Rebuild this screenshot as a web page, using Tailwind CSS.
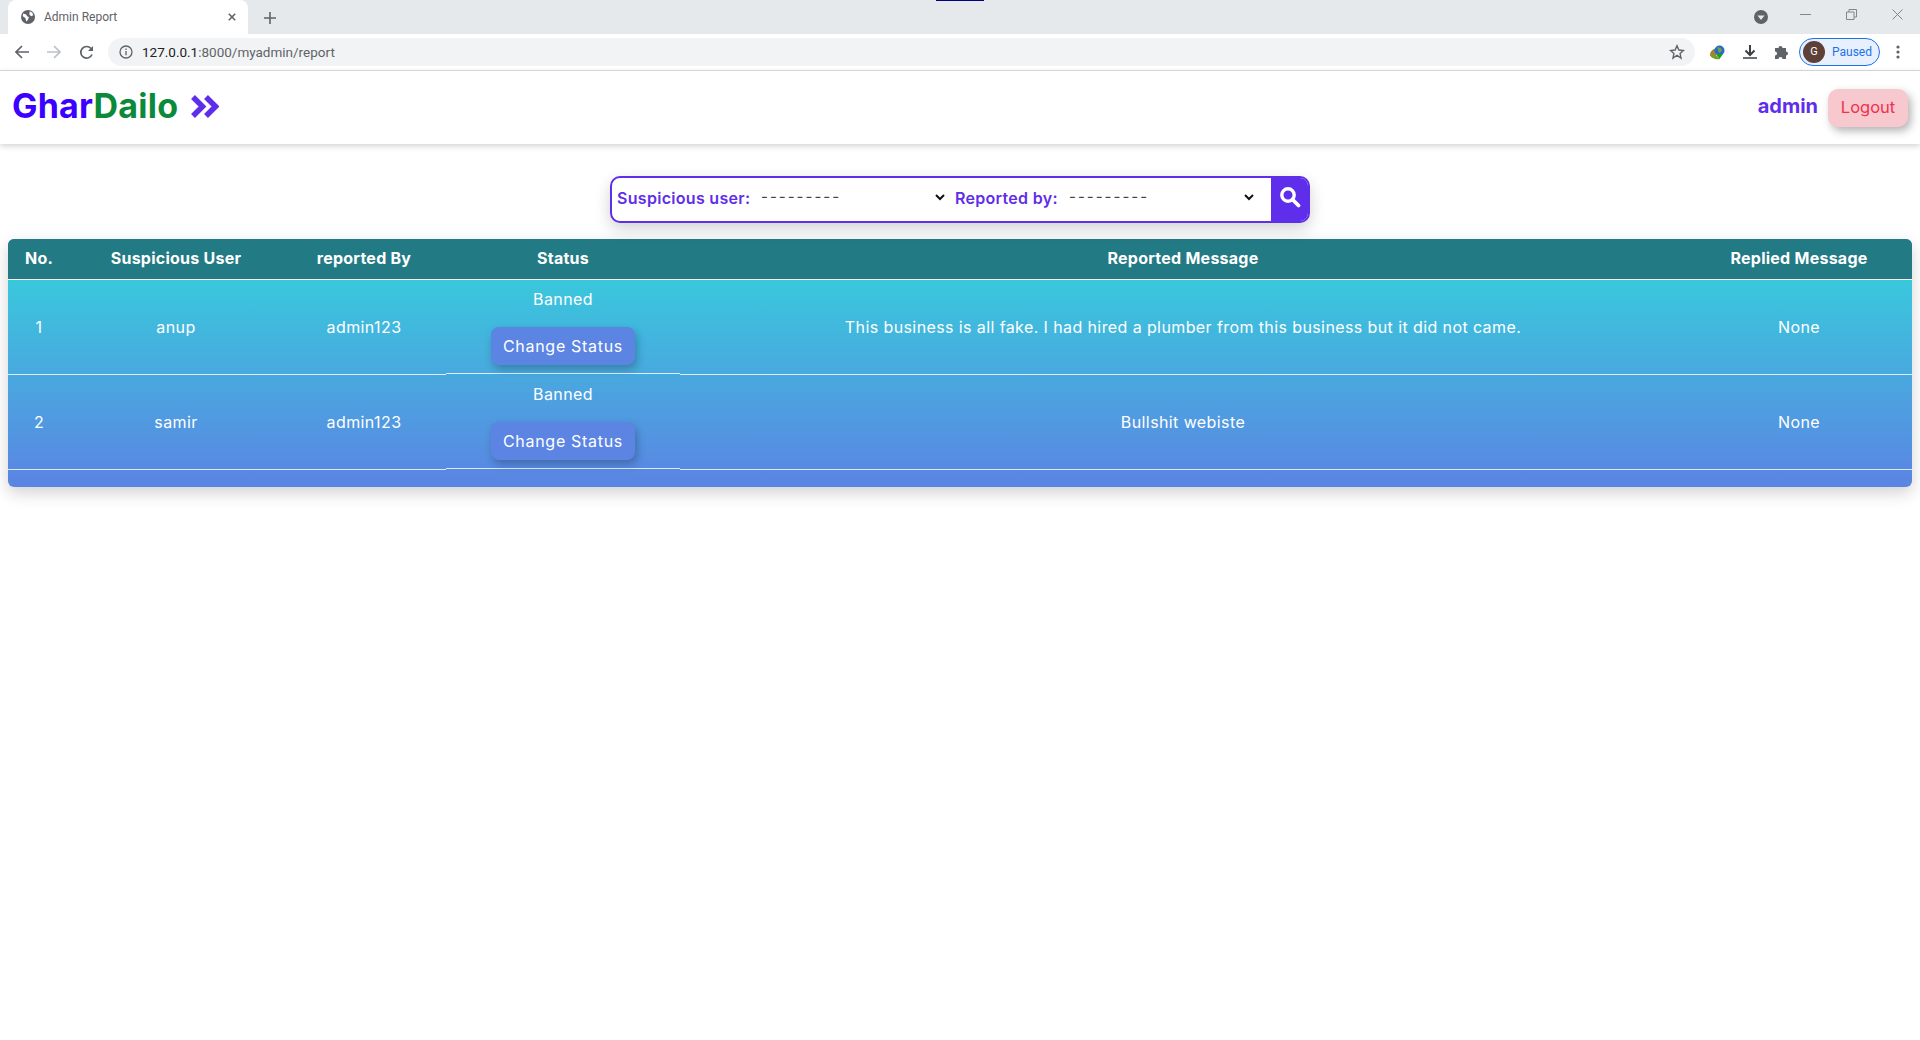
<!doctype html>
<html><head><meta charset="utf-8"><title>Admin Report</title>
<script src="https://cdn.jsdelivr.net/npm/@tailwindcss/browser@4"></script></head>
<body class="bg-white font-['Inter',sans-serif] overflow-hidden h-[1040px]">
<!-- browser chrome -->
<div class="h-[71px] flex flex-col font-['Roboto',sans-serif] border-b border-[#dadce0]">
  <div class="relative h-[34px] bg-[#e6e9ec] flex items-end pl-2">
    <div class="absolute left-[936px] top-0 w-[48px] h-[1px] bg-[#000080]"></div>
    <div class="w-[240px] h-[34px] bg-white rounded-t-lg flex items-center pl-[13px] pr-[12px] gap-[9px]">
      <svg width="14" height="14" viewBox="0 0 16 16"><circle cx="8" cy="8" r="8" fill="#5f6368"/><path d="M2.500 4l3.500 1 1 2 2 1-1 3-2 2-1-4-3-2zM10 1.500l3 1.500 1 3-2.500 1-2-2z" fill="#fff"/></svg>
      <span class="text-[12px] text-[#5f6368] flex-1">Admin Report</span>
      <svg width="8" height="8" viewBox="0 0 10 10" stroke="#5f6368" stroke-width="2"><path d="M1 1l8 8M9 1l-8 8"/></svg>
    </div>
    <svg class="ml-[16px] mb-[10px]" width="12" height="12" viewBox="0 0 12 12" stroke="#5f6368" stroke-width="1.6"><path d="M6 0v12M0 6h12"/></svg>
    <div class="ml-auto flex items-center h-[34px]">
      <svg class="mr-[32px]" width="14" height="14" viewBox="0 0 14 14"><circle cx="7" cy="7" r="7" fill="#5f6368"/><path d="M3.500 5.500h7L7 10z" fill="#e6e9ec"/></svg>
      <svg class="mr-[35px] mb-[6px]" width="11" height="11" viewBox="0 0 11 11" stroke="#80868b"><path d="M0 5.500h11"/></svg>
      <svg class="mr-[35px] mb-[6px]" width="11" height="11" viewBox="0 0 11 11" stroke="#80868b" fill="none"><path d="M.5 3h7.500v7.500H.5zM3 3V.5h7.500V8H8"/></svg>
      <svg class="mr-[17px] mb-[6px]" width="11" height="11" viewBox="0 0 11 11" stroke="#80868b"><path d="M.5.5l10 10M10.500.5l-10 10"/></svg>
    </div>
  </div>
  <div class="h-[36px] flex items-center pl-[15px] bg-white">
    <svg width="14" height="14" viewBox="0 0 14 14" stroke="#5f6368" stroke-width="1.7" fill="none"><path d="M14 7H1.500M7 1L1 7l6 6"/></svg>
    <svg class="ml-[18px]" width="14" height="14" viewBox="0 0 14 14" stroke="#bdc1c6" stroke-width="1.7" fill="none"><path d="M0 7h12.500M7 1l6 6-6 6"/></svg>
    <svg class="ml-[18px]" width="15" height="15" viewBox="0 0 15 15" stroke="#5f6368" stroke-width="1.7" fill="none"><path d="M13 9.500A5.800 5.800 0 1 1 12 3.500"/><path d="M14 1v5H9z" fill="#5f6368" stroke="none"/></svg>
    <div class="ml-[14px] w-[1587px] h-[28px] rounded-full bg-[#f1f3f4] flex items-center pl-[11px] pr-[10px]">
      <svg width="14" height="14" viewBox="0 0 14 14" fill="none" stroke="#5f6368" stroke-width="1.300"><circle cx="7" cy="7" r="6"/><path d="M7 6v4.200M7 3.600v1.300"/></svg>
      <span class="ml-[9px] text-[13.500px] text-[#202124]">127.0.0.1<span class="text-[#5f6368]">:8000/myadmin/report</span></span>
      <svg class="ml-auto" width="16" height="16" viewBox="0 0 16 16" fill="none" stroke="#5f6368" stroke-width="1.400"><path d="M8 1.800l1.900 4.200 4.600.5-3.400 3.100.9 4.500L8 11.300l-4 2.800.9-4.500-3.400-3.100 4.600-.5z"/></svg>
    </div>
    <svg class="ml-[14px]" width="17" height="17" viewBox="0 0 17 17"><path d="M1 11C1 7 5 4 8 5l-1 6 4 4c-4 1-9-1-10-4z" fill="#7a9a2a"/><path d="M1 11c1-3 3-4 6-4l-1 2c-2 0-3 1-4 3z" fill="#e0662c"/><circle cx="10.500" cy="6.500" r="5" fill="#2c67c9"/><path d="M8 3l4 1 1 3-3 2z" fill="#6da544"/><path d="M7 10l7 0-3.500 5z" fill="#1f9d20"/></svg>
    <svg class="ml-[16px]" width="16" height="16" viewBox="0 0 16 16" fill="none" stroke="#3c4043" stroke-width="2"><path d="M8 1v9.500M3.500 6.500L8 11l4.500-4.500"/><path d="M1 14h14" stroke-width="1.500"/></svg>
    <svg class="ml-[16px]" width="16" height="16" viewBox="0 0 16 16"><path d="M1 4h3.500a2 2 0 1 1 4 0H12v3.500a2 2 0 1 1 0 4V15H8.500a2 2 0 1 0-4 0H1v-3.500a2 2 0 1 0 0-4z" fill="#5f6368"/></svg>
    <div class="ml-[9px] w-[81px] h-[28px] rounded-full border border-[#1a73e8] bg-[#e8f0fe] flex items-center pl-[3px]">
      <span class="w-[22px] h-[22px] rounded-full bg-[#5d4037] text-white text-[11px] flex items-center justify-center">G</span>
      <span class="ml-[7px] text-[12px] text-[#1a73e8]">Paused</span>
    </div>
    <svg class="ml-[16px]" width="4" height="14" viewBox="0 0 4 14" fill="#5f6368"><circle cx="2" cy="2" r="1.600"/><circle cx="2" cy="7" r="1.600"/><circle cx="2" cy="12" r="1.600"/></svg>
  </div>
</div>
<!-- navbar -->
<nav class="h-[73px] bg-white shadow-[0_2px_6px_rgba(0,0,0,0.18)] flex items-center pl-[12px] pr-[12px] relative">
  <span class="text-[34px] leading-none font-bold tracking-[0.2px] -mt-[3px]"><span class="text-[#3c00ff]">Ghar</span><span class="text-[#0a8a3a]">Dailo</span></span>
  <svg class="ml-[13px] -mt-[2px]" width="28" height="23" viewBox="0 0 28 23" fill="none" stroke="#5f2eea" stroke-width="5.500"><path d="M2 2l9.500 9.500L2 21M15 2l9.500 9.500L15 21"/></svg>
  <span class="ml-auto text-[20px] font-bold text-[#5f2eea] mr-[10px] -mt-[3px]">admin</span>
  <button class="w-[80px] h-[38px] rounded-[10px] bg-[#f8c8cf] text-[#f0324b] text-[16.500px] shadow-[3px_4px_8px_rgba(0,0,0,0.3)]">Logout</button>
</nav>
<!-- search -->
<div class="flex justify-center mt-[32px]">
  <form class="w-[700px] h-[47px] flex border-2 border-[#5f2eea] rounded-[10px] bg-white shadow-[0_6px_16px_rgba(0,0,0,0.18)] overflow-hidden">
    <div class="flex-1 flex items-center pl-[5px] pb-[4px] text-[16px] font-semibold text-[#5f2eea] tracking-[0.3px]">
      <span class="w-[144px]">Suspicious user:</span>
      <span class="w-[174px] font-normal text-[#444] text-[15px] tracking-[2px]">---------</span>
      <svg width="10" height="7" viewBox="0 0 10 7" fill="none" stroke="#111" stroke-width="2"><path d="M1 1l4 4 4-4"/></svg>
      <span class="ml-[10px] w-[114px]">Reported by:</span>
      <span class="w-[175px] font-normal text-[#444] text-[15px] tracking-[2px]">---------</span>
      <svg width="10" height="7" viewBox="0 0 10 7" fill="none" stroke="#111" stroke-width="2"><path d="M1 1l4 4 4-4"/></svg>
    </div>
    <div class="w-[37px] bg-[#5f2eea] flex items-start justify-center pt-[8px]">
      <svg width="22" height="22" viewBox="0 0 22 22" fill="none" stroke="#fff"><circle cx="9" cy="9" r="6.200" stroke-width="3.400"/><path d="M13.500 13.500l6 6" stroke-width="3.800" stroke-linecap="round"/></svg>
    </div>
  </form>
</div>
<!-- table -->
<div class="mx-[8px] mt-[16px] w-[1904px] h-[248px] rounded-[6px] overflow-hidden bg-[linear-gradient(180deg,#39c8dc_16%,#5b84e3_100%)] shadow-[0_6px_16px_rgba(0,0,0,0.18)] text-white text-[16px] tracking-[0.4px] text-center">
  <div class="h-[41px] grid grid-cols-[62px_212px_164px_234px_1006px_226px] items-center bg-[#227a85] border-b border-white font-bold tracking-[0.25px] pb-[2px]">
    <div>No.</div><div>Suspicious User</div><div>reported By</div><div>Status</div><div>Reported Message</div><div>Replied Message</div>
  </div>
  <div class="h-[95px] grid grid-cols-[62px_212px_164px_234px_1006px_226px]">
    <div class="flex items-center justify-center border-b border-white/80">1</div>
    <div class="flex items-center justify-center border-b border-white/80">anup</div>
    <div class="flex items-center justify-center border-b border-white/80">admin123</div>
    <div class="h-[95px] -mt-[1px] border-b border-white/80 flex flex-col items-center pt-[10px]">
      <span class="leading-[20px]">Banned</span>
      <button class="mt-[18px] w-[144px] h-[38px] rounded-[8px] bg-[#5b84e3] tracking-[0.7px] shadow-[2px_4px_8px_rgba(0,0,0,0.25)]">Change Status</button>
    </div>
    <div class="flex items-center justify-center border-b border-white/80">This business is all fake. I had hired a plumber from this business but it did not came.</div>
    <div class="flex items-center justify-center border-b border-white/80">None</div>
  </div>
  <div class="h-[95px] grid grid-cols-[62px_212px_164px_234px_1006px_226px]">
    <div class="flex items-center justify-center border-b border-white/80">2</div>
    <div class="flex items-center justify-center border-b border-white/80">samir</div>
    <div class="flex items-center justify-center border-b border-white/80">admin123</div>
    <div class="h-[95px] -mt-[1px] border-b border-white/80 flex flex-col items-center pt-[10px]">
      <span class="leading-[20px]">Banned</span>
      <button class="mt-[18px] w-[144px] h-[38px] rounded-[8px] bg-[#5b84e3] tracking-[0.7px] shadow-[2px_4px_8px_rgba(0,0,0,0.25)]">Change Status</button>
    </div>
    <div class="flex items-center justify-center border-b border-white/80">Bullshit webiste</div>
    <div class="flex items-center justify-center border-b border-white/80">None</div>
  </div>
</div>
</body></html>
